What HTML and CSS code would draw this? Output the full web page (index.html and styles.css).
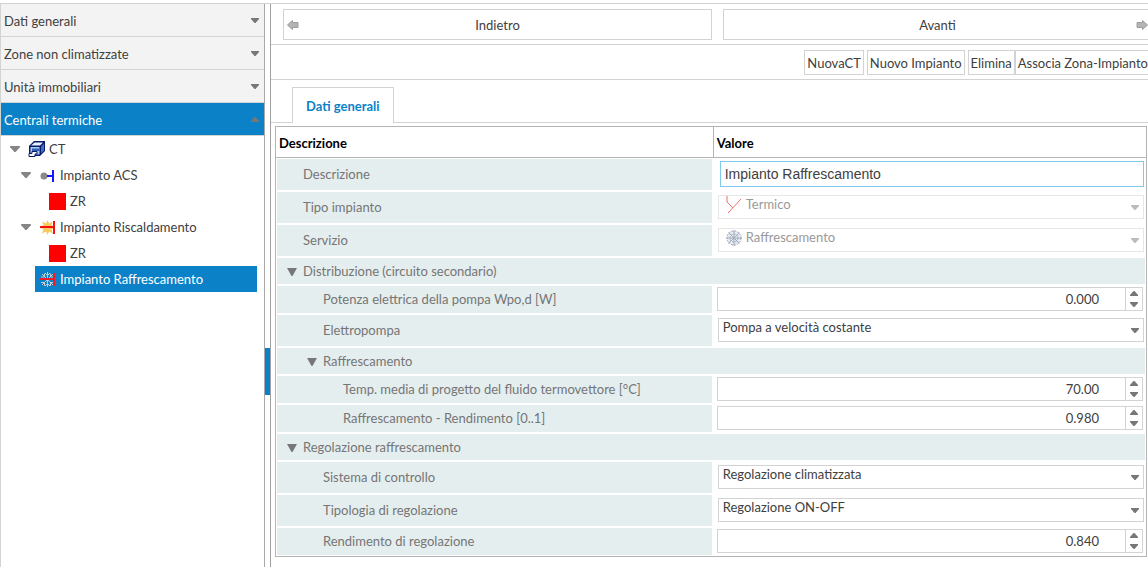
FILE: index.html
```html
<!DOCTYPE html>
<html lang="it">
<head>
<meta charset="utf-8">
<title>Centrali termiche</title>
<link rel="stylesheet" href="styles.css">
</head>
<body>
<svg class="defs" aria-hidden="true">
  <symbol id="down" viewBox="0 0 8 5"><path d="M0 0H8V1L4.500 5H3.500L0 1Z" fill="currentColor"/></symbol>
  <symbol id="up" viewBox="0 0 8 5"><path d="M0 5H8V4L4.500 0H3.500L0 4Z" fill="currentColor"/></symbol>
  <symbol id="big-down" viewBox="0 0 10 8"><path d="M0 0H10L5.500 8H4.500Z" fill="currentColor"/></symbol>
  <symbol id="arrow" viewBox="0 0 12 10"><path d="M.5 5L5.500 .5V2.500H11V7.500H5.500V9.500Z" fill="#b4b4b4" stroke="#9c9c9c"/></symbol>
</svg>
<div class="app">
  <aside class="sidebar">
    <button class="section">Dati generali<svg class="caret"><use href="#down"/></svg></button>
    <button class="section">Zone non climatizzate<svg class="caret"><use href="#down"/></svg></button>
    <button class="section">Unità immobiliari<svg class="caret"><use href="#down"/></svg></button>
    <button class="section open">Centrali termiche<svg class="caret"><use href="#up"/></svg></button>
    <ul class="tree">
      <li class="node level1">
        <svg class="twist"><use href="#down"/></svg>
        <svg class="icon" viewBox="0 0 18 18"><path d="M1 6L6 1H17V11L12 16H1Z" fill="#0a1a6b"/><path d="M3 5.500L6.500 2.500H15L12 5.500Z" fill="#e8f1fb"/><path d="M13 6.500L16 3.500V10.500L13 13.500Z" fill="#3f6fc0"/><path d="M2.500 7H11.500V14.500H2.500Z" fill="#a9cdf0"/><path d="M4 8.500H11.500V11H4Z" fill="#2f62b5"/><path d="M1 16.500V13.500H4V11.500H9V14H7V16.500Z" fill="#fff" stroke="#0a1a6b"/></svg>
        <span>CT</span>
      </li>
      <li class="node level2">
        <svg class="twist"><use href="#down"/></svg>
        <svg class="icon small" viewBox="0 0 15 15"><circle cx="4" cy="8" r="3.500" fill="#8a8a8a"/><path d="M7 8H13" stroke="#1616ff" stroke-width="2"/><path d="M13 2V14" stroke="#1616ff" stroke-width="2"/></svg>
        <span>Impianto ACS</span>
      </li>
      <li class="node level3"><i class="zone"></i><span>ZR</span></li>
      <li class="node level2">
        <svg class="twist"><use href="#down"/></svg>
        <svg class="icon small" viewBox="0 0 15 15"><path d="M7.500 0L9 3.500L12.500 1.500L11.500 5L15 7.500L11.500 9.500L13 13.500L9 11.500L7.500 15L6 11.500L2 13.500L3.500 9.500L0 7.500L3.500 5L2 1.500L6 3.500Z" fill="#f8c95c"/><path d="M0 7H14M14 1V14" stroke="#f01414" stroke-width="2"/></svg>
        <span>Impianto Riscaldamento</span>
      </li>
      <li class="node level3"><i class="zone"></i><span>ZR</span></li>
      <li class="node level2 selected">
        <svg class="icon small" viewBox="0 0 15 15"><g fill="none" stroke="#c3cbd3"><path d="M7.500 0V15M2 2L13 13M13 2L2 13M5 1L7.500 3.500L10 1M5 14L7.500 11.500L10 14M1 5H4.500V1.500M14 5H10.500V1.500M1 10.500H4.500V14M14 10.500H10.500V14"/></g><path d="M0 7H14M14 1V14" stroke="#ee1c24" stroke-width="2"/></svg>
        <span>Impianto Raffrescamento</span>
      </li>
    </ul>
  </aside>
  <div class="splitter"><button class="handle" aria-label="Comprimi pannello"></button></div>
  <main class="main">
    <nav class="steps">
      <button class="step"><svg class="arrow"><use href="#arrow"/></svg><span>Indietro</span></button>
      <button class="step"><span>Avanti</span><svg class="arrow next"><use href="#arrow"/></svg></button>
    </nav>
    <div class="toolbar">
      <button class="tool">NuovaCT</button>
      <button class="tool">Nuovo Impianto</button>
      <div class="pair"><button class="tool">Elimina</button><button class="tool">Associa Zona-Impianto</button></div>
    </div>
    <div class="tabs"><button class="tab">Dati generali</button></div>
    <table class="grid">
      <colgroup><col class="names"><col></colgroup>
      <thead><tr><th>Descrizione</th><th>Valore</th></tr></thead>
      <tbody>
        <tr class="tall"><td class="label in1"><label for="desc">Descrizione</label></td><td><input class="text" id="desc" value="Impianto Raffrescamento"></td></tr>
        <tr class="tall"><td class="label in1"><label for="tipo">Tipo impianto</label></td><td><div class="combo off"><svg class="picto" viewBox="0 0 16 18"><path d="M1 0V6L7 12M15 3L2 17" fill="none" stroke="#e8342c"/></svg><select id="tipo" disabled><option>Termico</option></select><svg class="caret"><use href="#down"/></svg></div></td></tr>
        <tr class="tall"><td class="label in1"><label for="serv">Servizio</label></td><td><div class="combo off"><svg class="picto" viewBox="0 0 16 18"><circle cx="8" cy="9" r="7" fill="#dfe4ea"/><g fill="none" stroke="#7887a0"><circle cx="8" cy="9" r="7" stroke-dasharray="2 1"/><circle cx="8" cy="9" r="4" stroke-dasharray="2 1"/><path d="M8 1V17M0 9H16M2.500 3.500L13.500 14.500M13.500 3.500L2.500 14.500"/></g></svg><select id="serv" disabled><option>Raffrescamento</option></select><svg class="caret"><use href="#down"/></svg></div></td></tr>
        <tr class="group"><td class="label in0" colspan="2"><svg class="fold"><use href="#big-down"/></svg>Distribuzione (circuito secondario)</td></tr>
        <tr class="num"><td class="label in2"><label for="pot">Potenza elettrica della pompa Wpo,d [W]</label></td><td><div class="spin"><input id="pot" inputmode="decimal" value="0.000"><div class="keys"><button aria-label="Aumenta"><svg><use href="#up"/></svg></button><button aria-label="Riduci"><svg><use href="#down"/></svg></button></div></div></td></tr>
        <tr class="tall"><td class="label in2"><label for="pompa">Elettropompa</label></td><td><div class="combo"><select id="pompa"><option>Pompa a velocità costante</option></select><svg class="caret"><use href="#down"/></svg></div></td></tr>
        <tr class="group"><td class="label in1b" colspan="2"><svg class="fold"><use href="#big-down"/></svg>Raffrescamento</td></tr>
        <tr class="num"><td class="label in3"><label for="temp">Temp. media di progetto del fluido termovettore [°C]</label></td><td><div class="spin"><input id="temp" inputmode="decimal" value="70.00"><div class="keys"><button aria-label="Aumenta"><svg><use href="#up"/></svg></button><button aria-label="Riduci"><svg><use href="#down"/></svg></button></div></div></td></tr>
        <tr class="num"><td class="label in3"><label for="rend">Raffrescamento - Rendimento [0..1]</label></td><td><div class="spin"><input id="rend" inputmode="decimal" value="0.980"><div class="keys"><button aria-label="Aumenta"><svg><use href="#up"/></svg></button><button aria-label="Riduci"><svg><use href="#down"/></svg></button></div></div></td></tr>
        <tr class="group"><td class="label in0" colspan="2"><svg class="fold"><use href="#big-down"/></svg>Regolazione raffrescamento</td></tr>
        <tr class="tall"><td class="label in2"><label for="sist">Sistema di controllo</label></td><td><div class="combo"><select id="sist"><option>Regolazione climatizzata</option></select><svg class="caret"><use href="#down"/></svg></div></td></tr>
        <tr class="tall"><td class="label in2"><label for="tipol">Tipologia di regolazione</label></td><td><div class="combo"><select id="tipol"><option>Regolazione ON-OFF</option></select><svg class="caret"><use href="#down"/></svg></div></td></tr>
        <tr class="num"><td class="label in2"><label for="rreg">Rendimento di regolazione</label></td><td><div class="spin"><input id="rreg" inputmode="decimal" value="0.840"><div class="keys"><button aria-label="Aumenta"><svg><use href="#up"/></svg></button><button aria-label="Riduci"><svg><use href="#down"/></svg></button></div></div></td></tr>
      </tbody>
    </table>
  </main>
</div>
</body>
</html>
```
FILE: styles.css
```css
* { box-sizing: border-box; }
body {
  margin: 0;
  padding-top: 3px;
  overflow: hidden;
  background: #fff;
  color: #404040;
  font: 13px/18px Lato, "Liberation Sans", sans-serif;
}
button, input, select { font: inherit; color: inherit; border-radius: 0; margin: 0; }
button { background: #fff; padding: 0; border: 1px solid #d3d3d3; }
svg { display: block; flex: none; }
.defs { position: absolute; width: 0; height: 0; }

.app { display: flex; min-height: calc(100vh - 3px); border-top: 1px solid #d3d3d3; }
.sidebar {
  flex: none;
  width: 265px;
  border: solid #d3d3d3;
  border-width: 0 1px;
  border-right-color: #a9a9a9;
}
.section {
  display: flex;
  align-items: center;
  justify-content: space-between;
  width: 100%;
  height: 33px;
  padding: 1px 5px 0 3px;
  border-width: 0 0 1px;
  background: #f3f3f3;
}
.section.open { background: #0b82c8; color: #fff; }
.caret { width: 8px; height: 5px; color: #777; }

.tree { list-style: none; margin: 0; padding: 0 7px 0 0; }
.node { display: flex; align-items: center; height: 26px; }
.twist { width: 10px; height: 6px; margin-right: 8px; color: #858585; }
.icon { width: 18px; height: 18px; margin-right: 3px; }
.icon.small { width: 15px; height: 15px; margin-right: 5px; }
.level1 { padding-left: 9px; }
.level2 { padding-left: 20px; }
.level2 .twist { margin-right: 9px; }
.level3 { padding-left: 48px; }
.zone { width: 17px; height: 17px; margin-right: 4px; background: #f00; }
.selected { margin-left: 34px; padding-left: 5px; background: #0b82c8; color: #fff; }

.splitter { display: flex; align-items: center; flex: none; width: 5px; padding-top: 171px; }
.handle { width: 5px; height: 47px; border: 0; background: #0b82c8; }

.main { flex: 1; min-width: 0; border-left: 1px solid #a0a0a0; }
.steps {
  display: grid;
  grid-template-columns: 1fr 1fr;
  gap: 11px;
  margin-right: -4px;
  padding: 5px 0 4px 12px;
  border-bottom: 1px solid #d3d3d3;
}
.step {
  display: grid;
  grid-template-columns: 12px 1fr 12px;
  align-items: center;
  height: 31px;
  padding: 0 3px;
}
.step span { grid-area: 1 / 2; }
.arrow { grid-area: 1 / 1; width: 12px; height: 10px; }
.next { grid-area: 1 / 3; transform: rotate(180deg); }
.toolbar {
  display: flex;
  justify-content: flex-end;
  gap: 3px;
  margin-right: -3px;
  padding: 5px 0 4px;
  border-bottom: 1px solid #d3d3d3;
}
.pair { display: flex; }
.tool { height: 25px; padding: 0 2px; white-space: nowrap; }
.tabs { display: flex; padding: 7px 0 0 21px; border-bottom: 1px solid #d3d3d3; }
.tab {
  height: 36px;
  margin-bottom: -1px;
  padding: 0 13px;
  border-bottom: 0;
  color: #0b82c8;
  font-weight: 700;
}

.grid {
  width: calc(100% - 5px);
  margin: 3px 1px 0 4px;
  border: 1px solid #b4b4b4;
  border-spacing: 0;
  table-layout: fixed;
}
.names { width: 50.2%; }
.grid th {
  height: 31px;
  padding: 1px 3px 0;
  border-bottom: 1px solid #b4b4b4;
  color: #000;
  text-align: left;
}
.grid th + th { border-left: 1px solid #b4b4b4; }
.grid td { padding: 0 2px 2px 4px; }
.grid tbody td.label {
  border: 1px solid #fff;
  padding-block: 0 1px;
  background: #e5eeef;
  color: #757575;
}
.tall { height: 33px; }
.num { height: 29px; }
.group { height: 28px; }
.grid td.in0 { padding-left: 10px; }
.grid td.in1 { padding-left: 26px; }
.grid td.in1b { padding-left: 30px; }
.grid td.in2 { padding-left: 46px; }
.grid td.in3 { padding-left: 66px; }
.fold { display: inline-block; width: 10px; height: 8px; margin-right: 6px; color: #777; }

.text {
  display: block;
  width: calc(100% - 3px);
  height: 26px;
  margin-left: 3px;
  padding: 0 4px;
  border: 1px solid #7ecbee;
  font: 14px "Liberation Sans", Arial, sans-serif;
  outline: 0;
}
.combo { position: relative; margin: 1px 0 0 1px; }
.combo select {
  display: block;
  appearance: none;
  width: 100%;
  height: 24px;
  padding: 0 24px 6px 4px;
  border: 1px solid #d3d3d3;
  background: #fff;
  line-height: 16px;
  opacity: 1;
}
.combo .caret { position: absolute; right: 5px; top: 10px; }
.combo.off select { padding-left: 27px; border-color: #e7e7e7; color: #999; }
.off .caret { color: #bbb; }
.picto { position: absolute; left: 8px; top: 1px; width: 16px; height: 18px; opacity: .7; }

.spin { display: flex; height: 24px; margin-right: 1px; border: 1px solid #d3d3d3; }
.spin input { flex: 1; min-width: 0; padding: 0 26px 0 4px; border: 0; text-align: right; }
.keys { display: flex; flex-direction: column; width: 17px; border-left: 1px solid #d3d3d3; }
.keys button { display: grid; flex: 1; place-items: center; border: 0; background: none; }
.keys svg { width: 8px; height: 5px; color: #777; }
```
